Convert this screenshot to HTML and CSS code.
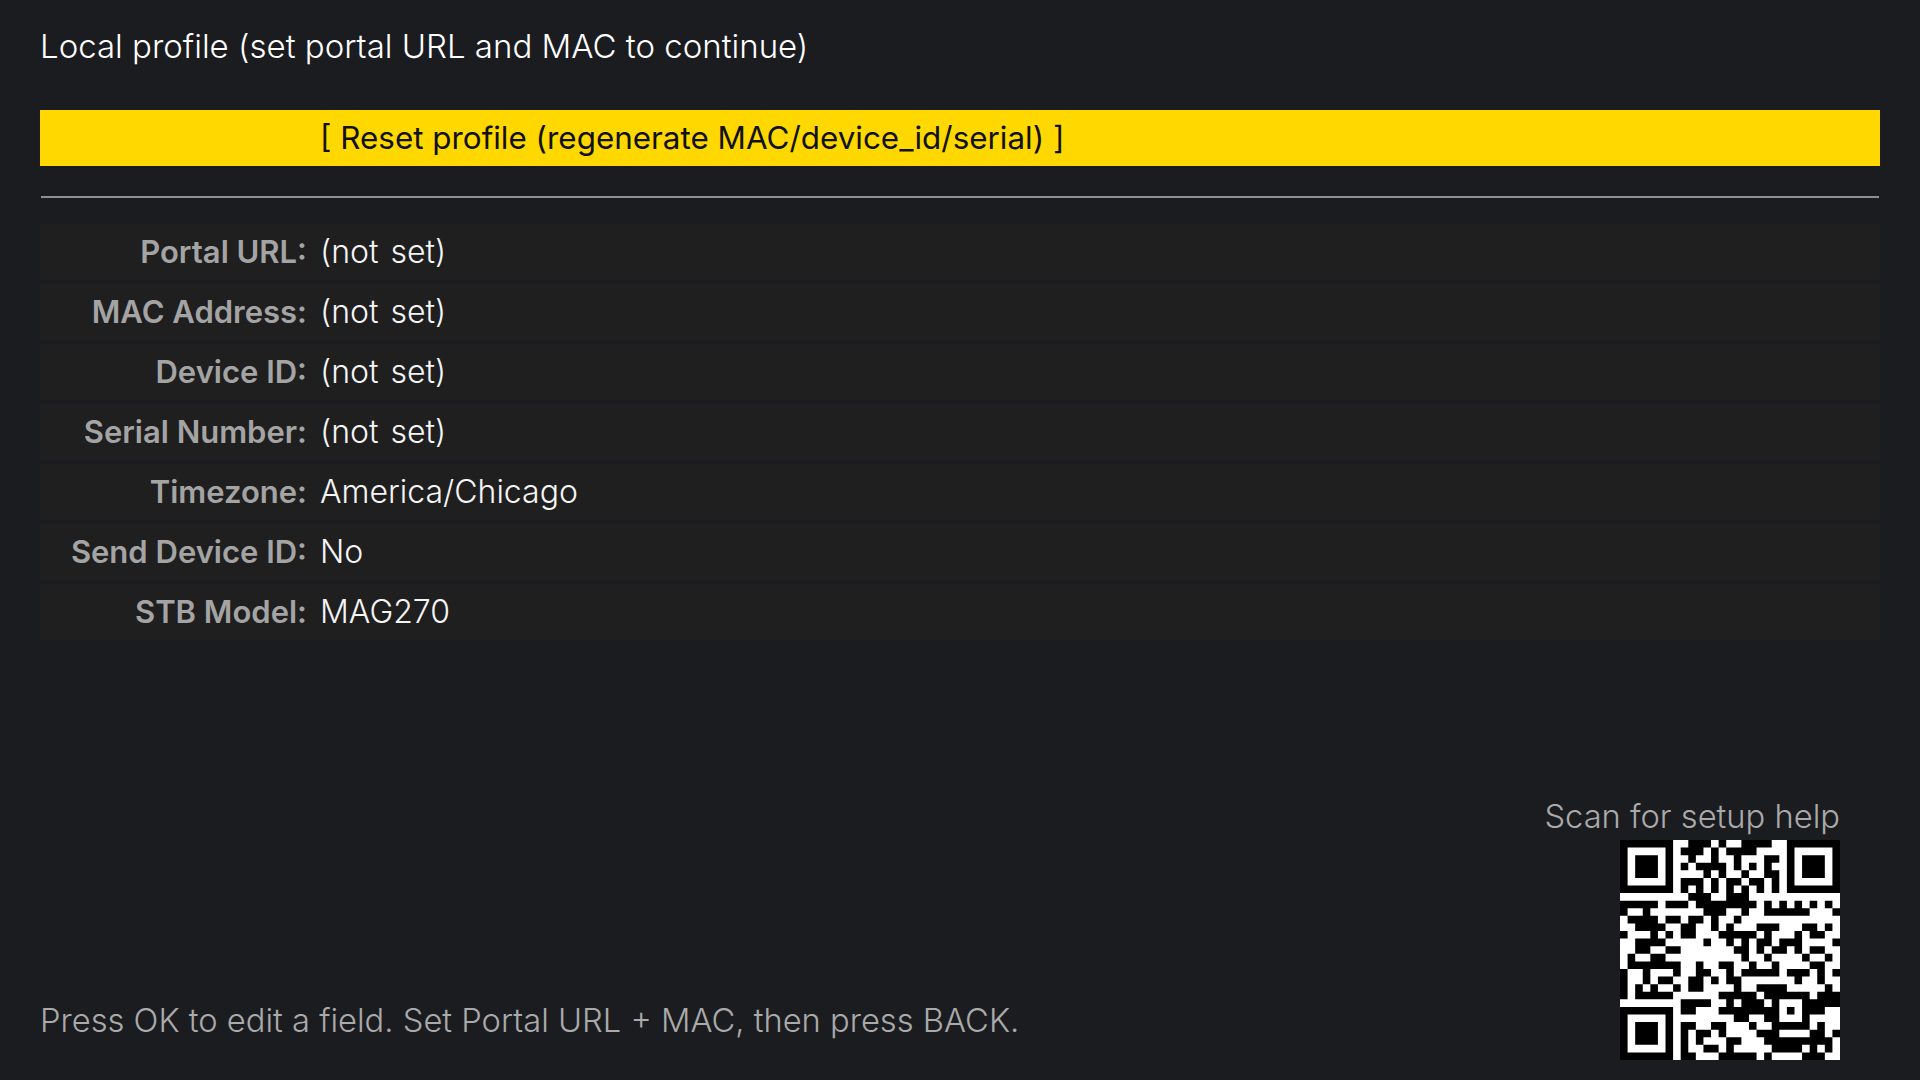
FILE: index.html
```html
<!DOCTYPE html>
<html lang="en">
<head>
<meta charset="utf-8">
<title>Local profile</title>
<link rel="stylesheet" href="styles.css">
</head>
<body>
<main class="screen">
  <h1 class="title">Local profile (set portal URL and MAC to continue)</h1>
  <div class="reset"><span class="reset-text">[ Reset profile (regenerate MAC/device_id/serial) ]</span></div>
  <hr class="divider">
  <div class="fields">
    <div class="field"><span class="label">Portal URL:</span><span class="value">(not set)</span></div>
    <div class="field"><span class="label">MAC Address:</span><span class="value">(not set)</span></div>
    <div class="field"><span class="label">Device ID:</span><span class="value">(not set)</span></div>
    <div class="field"><span class="label">Serial Number:</span><span class="value">(not set)</span></div>
    <div class="field"><span class="label">Timezone:</span><span class="value">America/Chicago</span></div>
    <div class="field"><span class="label">Send Device ID:</span><span class="value">No</span></div>
    <div class="field"><span class="label">STB Model:</span><span class="value">MAG270</span></div>
  </div>
  <footer class="footer">
    <p class="hint">Press OK to edit a field. Set Portal URL + MAC, then press BACK.</p>
    <div class="help">
      <p class="help-text">Scan for setup help</p>
      <svg class="qr" viewBox="0 0 29 29" aria-label="QR code"><rect width="29" height="29" fill="#fff"/><path fill="none" stroke="#000" stroke-width="1" d="M0 .5h7m2 0h3m1 0h1m2 0h4m2 0h7M0 1.5h1m5 0h1m1 0h3m1 0h1m1 0h4m4 0h1m5 0h1M0 2.5h1m1 0h3m1 0h1m2 0h1m2 0h1m2 0h1m3 0h2m1 0h1m1 0h3m1 0h1M0 3.5h1m1 0h3m1 0h1m1 0h1m1 0h4m1 0h1m1 0h1m1 0h1m2 0h1m1 0h3m1 0h1M0 4.5h1m1 0h3m1 0h1m4 0h1m1 0h1m2 0h1m2 0h2m1 0h1m1 0h3m1 0h1M0 5.5h1m5 0h1m1 0h3m1 0h1m1 0h2m1 0h2m1 0h1m1 0h1m5 0h1M0 6.5h7m1 0h1m1 0h1m1 0h1m1 0h1m1 0h1m1 0h1m1 0h1m1 0h7M9 7.5h3m2 0h3M0 8.5h5m1 0h3m1 0h8m1 0h1m1 0h1m1 0h1m1 0h1m1 0h1M0 9.5h1m2 0h1m7 0h3m2 0h1m2 0h6m3 0h1M1 10.5h4m1 0h2m1 0h2m1 0h1m2 0h1M2 11.5h4m2 0h2m2 0h1m1 0h1m3 0h3m3 0h2m1 0h1M0 12.5h1m3 0h1m1 0h1m1 0h2m3 0h5m1 0h1m3 0h1m1 0h2M2 13.5h4m5 0h1m2 0h1m1 0h1m1 0h2m1 0h3m4 0h1M2 14.5h2m2 0h2m7 0h2m1 0h1m1 0h2m1 0h1m1 0h2M1 15.5h1m2 0h2m10 0h1m2 0h1m4 0h1m2 0h1M1 16.5h7m2 0h1m2 0h2m2 0h1m2 0h1m4 0h2M0 17.5h1m2 0h1m3 0h1m2 0h2m2 0h1m1 0h5m1 0h3m1 0h1m1 0h1M0 18.5h1m2 0h1m1 0h2m2 0h2m1 0h1m1 0h2m7 0h1m2 0h1M0 19.5h1m1 0h1m1 0h1m2 0h1m1 0h2m4 0h1m2 0h4m5 0h1M0 20.5h1m1 0h5m6 0h5m1 0h6m1 0h3M8 21.5h4m2 0h1m1 0h3m1 0h1m3 0h5M0 22.5h7m1 0h2m3 0h8m1 0h1m1 0h3M0 23.5h1m5 0h1m8 0h2m2 0h2m3 0h1M0 24.5h1m1 0h3m1 0h1m1 0h2m2 0h2m3 0h1m2 0h5m1 0h1M0 25.5h1m1 0h3m1 0h1m1 0h1m1 0h2m1 0h1m4 0h3m4 0h2m1 0h1M0 26.5h1m1 0h3m1 0h1m1 0h1m1 0h1m3 0h2m3 0h9M0 27.5h1m5 0h1m1 0h1m2 0h2m1 0h1m5 0h4m1 0h1m1 0h1M0 28.5h7m1 0h2m3 0h5m1 0h1m4 0h3"/></svg>
    </div>
  </footer>
</main>
</body>
</html>
```

FILE: styles.css
```css
html, body {
  margin: 0;
  padding: 0;
  background: #1b1c20;
}

.screen {
  box-sizing: border-box;
  width: 1920px;
  height: 1080px;
  padding: 24px 40px 20px;
  display: flex;
  flex-direction: column;
  font-family: Inter, sans-serif;
  font-size: 32px;
  overflow: hidden;
}

.title {
  margin: 0;
  height: 86px;
  line-height: 44px;
  font-size: 33px;
  font-weight: 300;
  color: #fff;
}

.reset {
  height: 56px;
  line-height: 56px;
  padding-left: 280px;
  background: #ffd800;
  color: #111;
  font-size: 31.4px;
}

.divider {
  margin: 30px 1px 26px;
  height: 2px;
  border: 0;
  background: #8f8f91;
}

.fields {
  display: flex;
  flex-direction: column;
  gap: 4px;
}

.field {
  display: flex;
  height: 56px;
  line-height: 56px;
  background: #1f1f20;
}

.label {
  width: 267px;
  margin-right: 13px;
  text-align: right;
  font-size: 31px;
  font-weight: 600;
  color: #a4a4a4;
}

.value {
  color: #f5f5f5;
  font-weight: 300;
  word-spacing: 3px;
}

.footer {
  margin-top: auto;
  display: flex;
  justify-content: space-between;
  align-items: flex-end;
}

.hint {
  margin: 0 0 18px;
  line-height: 44px;
  font-size: 32.7px;
  font-weight: 300;
  color: #aaa;
}

.help {
  display: flex;
  flex-direction: column;
  align-items: flex-end;
  margin-right: 40px;
}

.help-text {
  margin: 0 0 2px;
  line-height: 44px;
  font-size: 32.7px;
  font-weight: 300;
  color: #aaa;
}

.qr {
  display: block;
  width: 220px;
  height: 220px;
}
```
